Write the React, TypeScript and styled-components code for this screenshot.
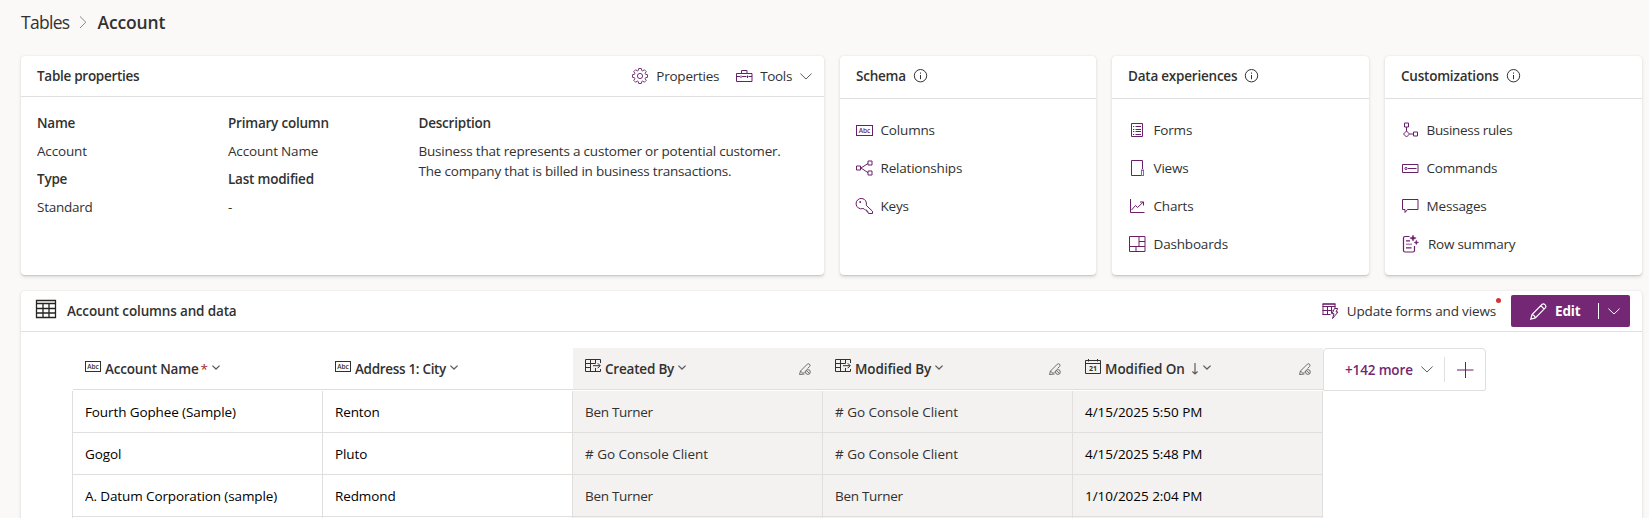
import React from "react";
import styled, { createGlobalStyle } from "styled-components";

const GlobalStyle = createGlobalStyle`
  * { box-sizing: border-box; }
  body {
    margin: 0;
    height: 518px;
    overflow: hidden;
    background: #faf9f8;
    color: #323130;
    font: 13.5px/20px "Segoe UI", "Open Sans", "Noto Sans", sans-serif;
  }
  svg { display: block; flex: none; overflow: visible; }
`;

const purple = "#742774";
const iconPurple = "#6a1f6b";
const line = "#e1dfdd";

type TextProps = { $track?: number; $strong?: boolean };

const Text = styled.span<TextProps>`
  white-space: nowrap;
  letter-spacing: ${(p) => p.$track ?? (p.$strong ? -0.22 : -0.17)}px;
  font-weight: ${(p) => (p.$strong ? 600 : 400)};
`;

const Page = styled.main`
  width: 1649px;
  height: 518px;
  padding: 0 7px 0 21px;
  overflow: hidden;
`;

const Breadcrumb = styled.nav`
  display: flex;
  align-items: center;
  height: 43px;
  margin-bottom: 13px;
  font-size: 17.5px;
  svg { margin: 0 10px 0 10px; }
`;

const TopCards = styled.section`
  display: grid;
  grid-template-columns: 803px 256px 257px 257px;
  gap: 16px;
  height: 219px;
  margin-bottom: 16px;
`;

const Card = styled.article`
  background: #fff;
  border-radius: 4px;
  box-shadow: 0 1.6px 3.6px rgba(0, 0, 0, 0.13), 0 0.3px 0.9px rgba(0, 0, 0, 0.1);
`;

const CardHeader = styled.header<{ $tall?: boolean }>`
  display: flex;
  align-items: center;
  height: ${(p) => (p.$tall ? 43 : 41)}px;
  padding: 0 12px ${(p) => (p.$tall ? 2 : 0)}px 16px;
  border-bottom: 1px solid ${line};
  svg { margin-left: 8px; }
`;

const Actions = styled.div`
  display: flex;
  align-items: center;
  margin-left: auto;
`;

const Action = styled.div<{ $gap?: number }>`
  position: relative;
  display: flex;
  align-items: center;
  gap: 8px;
  margin-left: ${(p) => p.$gap ?? 0}px;
  svg { margin: 0; }
`;

const Facts = styled.div`
  display: grid;
  grid-template-columns: 191px 190.5px 1fr;
  padding: 16px 16px 0;
`;

const FactColumn = styled.div`
  display: flex;
  flex-direction: column;
  gap: 8px;
`;

const Links = styled.ul<{ $indent: number }>`
  list-style: none;
  margin: 0;
  padding: 12px 0 0 ${(p) => p.$indent}px;
`;

const LinkItem = styled.li<{ $wide?: boolean }>`
  display: grid;
  grid-template-columns: ${(p) => (p.$wide ? 26 : 24.5)}px 1fr;
  align-items: center;
  height: 38px;
`;

const DataCard = styled(Card)`
  height: 240px;
`;

const DataHeader = styled(CardHeader)`
  padding: 0 12px 0 15px;
  > svg { margin: 0 11px 4px 0; }
`;

const Dot = styled.i`
  position: absolute;
  top: -3px;
  right: -5px;
  width: 5px;
  height: 5px;
  border-radius: 50%;
  background: #d13438;
`;

const EditButton = styled.button`
  display: flex;
  align-items: center;
  width: 119px;
  height: 32px;
  margin-left: 15px;
  padding: 0 10px 0 19px;
  border: 0;
  border-radius: 2px;
  background: ${purple};
  color: #fff;
  font: inherit;
  svg { margin: 0; }
`;

const EditLabel = styled(Text)`
  width: 43px;
  margin-left: 8px;
  text-align: left;
  font-weight: 700;
`;

const SplitLine = styled.i`
  width: 1px;
  height: 16px;
  margin-right: 9px;
  background: #fff;
`;

const TableArea = styled.div`
  display: flex;
  align-items: flex-start;
  padding: 16px 0 0 51px;
`;

const Table = styled.div`
  width: 1251px;
`;

const HeadRow = styled.div`
  display: grid;
  grid-template-columns: repeat(5, 250px);
  height: 42px;
  margin: 0 0 1px 1px;
  border-bottom: 1px solid ${line};
`;

const HeadCell = styled.div<{ $locked?: boolean }>`
  display: flex;
  align-items: center;
  padding: 0 12px;
  background: ${(p) => (p.$locked ? "#f3f2f1" : "#fff")};
  > svg:first-child { margin: 0 4px 5px 0; }
  > svg:last-child { margin-left: auto; }
`;

const HeadMark = styled.span<{ $space: number }>`
  margin-left: ${(p) => p.$space}px;
`;

const Required = styled(Text)`
  margin-left: 2px;
  color: #a4262c;
`;

const BodyRow = styled.div`
  display: grid;
  grid-template-columns: 251px repeat(4, 250px);
  height: 42px;
`;

const Cell = styled.div<{ $locked?: boolean; $soft?: boolean }>`
  display: flex;
  align-items: center;
  padding-left: 12px;
  border-right: 1px solid ${line};
  border-bottom: 1px solid ${line};
  background: ${(p) => (p.$locked ? "#f3f2f1" : "#fff")};
  color: ${(p) => (p.$soft ? "#323130" : "#000")};
  &:first-child { border-left: 1px solid ${line}; }
`;

const MoreBox = styled.div`
  display: flex;
  align-items: center;
  width: 163px;
  height: 43px;
  padding-left: 21px;
  border: 1px solid ${line};
  border-radius: 4px 4px 2px 0;
  color: ${purple};
`;

const MoreDivider = styled.i`
  width: 1px;
  height: 25px;
  margin: 0 12px 0 11px;
  background: ${line};
`;

type SvgProps = { w: number; h: number; color?: string; sw?: number; children: React.ReactNode };
const Svg = ({ w, h, color = iconPurple, sw = 1, children }: SvgProps) => (
  <svg width={w} height={h} viewBox={`0 0 ${w} ${h}`} fill="none" stroke={color} strokeWidth={sw}>
    {children}
  </svg>
);

const Chevron = ({ w = 12, color = "#605e5c", sw = 1 }) => (
  <Svg w={w} h={7} color={color} sw={sw}>
    <path d={`M.4 .6 ${w / 2} ${w / 2} ${w - 0.4} .6`} />
  </Svg>
);

const InfoIcon = () => (
  <Svg w={14} h={14} color="#323130">
    <circle cx="6.500" cy="6.700" r="6.200" />
    <path d="M6.500 6v4.200M6.500 3.500v1.200" />
  </Svg>
);

const gearPath = (() => {
  const pts: string[] = [];
  for (let i = 0; i < 8; i++) {
    const steps: [number, number][] = [[-17, 5.8], [-10, 7.6], [10, 7.6], [17, 5.8]];
    steps.forEach(([off, r]) => {
      const a = ((i * 45 + off) * Math.PI) / 180;
      pts.push(`${(8 + r * Math.cos(a)).toFixed(2)} ${(8 + r * Math.sin(a)).toFixed(2)}`);
    });
  }
  return `M${pts.join("L")}Z`;
})();

const GearIcon = () => (
  <Svg w={16} h={16} sw={0.9}>
    <path d={gearPath} />
    <circle cx="8" cy="8" r="2.6" />
  </Svg>
);

const ToolboxIcon = () => (
  <Svg w={16} h={12}>
    <path d="M.5 3.500h15.500v8H.5zM5.500 3.500v-3h5.500v3M.5 6.500h3.500M6 6.500h4.500M12.500 6.500h3.500M5 5.500v2.500M11.500 5.500v2.500" />
  </Svg>
);

const AbcIcon = ({ w = 17, color = iconPurple }) => (
  <Svg w={w} h={11} color={color}>
    <rect x=".5" y=".5" width={w - 1} height="10" />
    <text x={w / 2} y="8" fontSize="6.5" fontWeight="600" textAnchor="middle" fill={color} stroke="none">
      Abc
    </text>
  </Svg>
);

const RelationIcon = () => (
  <Svg w={17} h={16}>
    <path d="M.5 6h4v4h-4zM12 1h4v4h-4zM12 11h4v4h-4zM12 3.500 5 8l7 4.700" />
  </Svg>
);

const KeyIcon = () => (
  <Svg w={17} h={16}>
    <path d="M10.200 7.300a5.200 5.200 0 1 0-3.400 3.300l1.200 .1 1.500 1.500h1.400v1.500H12v1.300l.9.500h3.600v-2.200z" />
    <circle cx="4.200" cy="4" r=".9" fill={iconPurple} stroke="none" />
  </Svg>
);

const FormIcon = () => (
  <Svg w={16} h={16}>
    <path d="M2.500 1.500h11v13h-11zM6.500 4.500h5.500M6.500 7.500h5.500M6.500 9.500h5.500M6.500 12.500h5.500M4 4.500h1.200M4 7.500h1.200M4 9.500h1.200M4 12.500h1.200" />
  </Svg>
);

const ViewIcon = () => (
  <Svg w={16} h={16}>
    <path d="M13.500 9V.500h-11v15h9.500" />
    <rect x="12.500" y="10" width="2" height="5.500" stroke="#6f6dc0" />
  </Svg>
);

const ChartIcon = () => (
  <Svg w={16} h={16}>
    <path d="M1.500 1v13.500H15.500M2.500 12l4-4.500 2 2L14.300 4M11 4h3.500v3.500" />
  </Svg>
);

const DashboardIcon = () => (
  <Svg w={16} h={16}>
    <path d="M.5 .5h15.500v15H.5zM10 .500v10M10 5.500h6M.5 10.500h15.500M7 10.500v5" />
  </Svg>
);

const RuleIcon = () => (
  <Svg w={17} h={16}>
    <path d="M2.500 1h4v4h-4zM4.500 5v4M4.500 9 7.500 12l-3 3-3-3zM7.500 12h4M11.500 10h4v4h-4z" />
  </Svg>
);

const CommandIcon = () => (
  <Svg w={16} h={9}>
    <path d="M.5 .5h15.500v8H.5zM6 4.500h8.500" />
    <circle cx="4" cy="4.500" r="1.100" />
  </Svg>
);

const MessageIcon = () => (
  <Svg w={16} h={14}>
    <path d="M.5 .5h15.500v10H5.500L3 13.500v-3H.5z" />
  </Svg>
);

const SummaryIcon = () => (
  <Svg w={17} h={17} sw={1.2}>
    <path d="M7.500 .500H3q-1.500 0-1.500 1.500v12.500Q1.500 16 3 16h8q1.500 0 1.500-1.500V10" />
    <path d="M4 4.800h4M4 11.800h5.500" />
    <path d="M4 8.300h6" stroke="#b58ab5" strokeWidth="1.600" />
    <path d="M11 -.9l.9 2.100 2.300.9-2.300.9L11 5.100l-.9-2.100-2.300-.9 2.300-.9zM14.300 4.300l.6 1.600 1.700.6-1.700.6-.6 1.600-.6-1.600-1.600-.6 1.600-.6z" fill={iconPurple} strokeWidth=".5" />
  </Svg>
);

const GridIcon = () => (
  <Svg w={20} h={18} color="#252423">
    <path d="M.5 .5h19v17H.5zM.5 3.500h19M.5 8.500h19M.5 13h19M7 3.500v14M13 3.500v14" strokeWidth="1.300" />
  </Svg>
);

const UpdateIcon = () => (
  <Svg w={17} h={16}>
    <path d="M.5 1h13" strokeWidth="1.600" />
    <path d="M.5 3.500h13M.5 7.500h10M.5 11.500h8M1 1v11M5.500 3.500v8M9.500 3.500v7M13 1v4" />
    <path d="M12.500 5.500h3.200l-1.700 3.500h2L10.500 15.500l1.500-4.800H10z" fill="#fff" />
  </Svg>
);

const PencilIcon = () => (
  <Svg w={17} h={17} color="#fff" sw={1.2}>
    <path d="M.8 16.200 2 11.500 12.200 1.300q1.300-1 2.800.300 1.700 1.500.500 3.100L5.300 15zM10.800 2.700l3.300 3.300M2 11.500q2.600.500 3.300 3.500" />
  </Svg>
);

const LookupIcon = () => (
  <Svg w={16} h={14} color="#323130">
    <path d="M15.500 4V.5H.5v12h15V10M5.500.500v12M.5 4.500h10M.5 8.500h5M10.500.500v4M10.500 9v3.500M8 6.700h7M12.700 4.200l2.500 2.500-2.500 2.500" />
  </Svg>
);

const DateIcon = () => (
  <Svg w={16} h={15} color="#323130">
    <path d="M.5 1.500h15v13H.5zM.5 4.500h15M3.500 0v2.500M12.500 0v2.500" />
    <text x="8" y="12.200" fontSize="7" fontWeight="700" textAnchor="middle" fill="#323130" stroke="none">21</text>
  </Svg>
);

const LockedEditIcon = () => (
  <Svg w={12} h={12} color="#605e5c" sw={0.9}>
    <path d="M5.500 11 .5 11.500 1.500 8 8.300 1.200q1-.9 2.200 0 1 1.100.200 2.200L8.500 5.500M1.500 8l2.500 2.500 2-2" />
    <circle cx="8.900" cy="9" r="2.400" />
    <path d="m7.300 7.400 3.200 3.200" />
  </Svg>
);

const CrumbChevron = () => (
  <Svg w={8} h={12} color="#8a8886">
    <path d="M1 .5 6.800 6.200 1 12" />
  </Svg>
);

const PlusIcon = () => (
  <Svg w={16} h={16}>
    <path d="M8.500 0v16M0 8h16.500" />
  </Svg>
);

const SortArrow = () => (
  <Svg w={6} h={12} color="#605e5c">
    <path d="M3 0v11M.4 8.500 3 11l2.600-2.500" strokeWidth="1.200" />
  </Svg>
);

type LinkEntry = { label: string; icon: React.ReactNode; track?: number };

const linkCards: { title: string; indent: number; links: LinkEntry[] }[] = [
  {
    title: "Schema",
    indent: 16,
    links: [
      { label: "Columns", icon: <AbcIcon /> },
      { label: "Relationships", icon: <RelationIcon />, track: -0.2 },
      { label: "Keys", icon: <KeyIcon /> },
    ],
  },
  {
    title: "Data experiences",
    indent: 17,
    links: [
      { label: "Forms", icon: <FormIcon /> },
      { label: "Views", icon: <ViewIcon /> },
      { label: "Charts", icon: <ChartIcon /> },
      { label: "Dashboards", icon: <DashboardIcon /> },
    ],
  },
  {
    title: "Customizations",
    indent: 17,
    links: [
      { label: "Business rules", icon: <RuleIcon />, track: -0.32 },
      { label: "Commands", icon: <CommandIcon /> },
      { label: "Messages", icon: <MessageIcon /> },
      { label: "Row summary", icon: <SummaryIcon />, track: -0.25 },
    ],
  },
];

const columns = [
  { title: "Account Name", icon: <AbcIcon w={16} color="#323130" />, required: true, track: -0.18, space: 4 },
  { title: "Address 1: City", icon: <AbcIcon w={16} color="#323130" />, track: -0.32, space: 4 },
  { title: "Created By", icon: <LookupIcon />, locked: true, track: -0.2, space: 4 },
  { title: "Modified By", icon: <LookupIcon />, locked: true, track: -0.1, space: 4 },
  { title: "Modified On", icon: <DateIcon />, locked: true, sorted: true, track: -0.05, space: 5 },
];

const rows = [
  ["Fourth Gophee (Sample)", "Renton", "Ben Turner", "# Go Console Client", "4/15/2025 5:50 PM"],
  ["Gogol", "Pluto", "# Go Console Client", "# Go Console Client", "4/15/2025 5:48 PM"],
  ["A. Datum Corporation (sample)", "Redmond", "Ben Turner", "Ben Turner", "1/10/2025 2:04 PM"],
  ["", "", "", "", ""],
];

const cellTrack = (value: string) => {
  if (value.startsWith("#") || value.endsWith("PM")) return -0.03;
  if (value === "Ben Turner") return -0.3;
  return -0.11;
};

export default function App() {
  return (
    <Page>
      <GlobalStyle />
      <Breadcrumb>
        <Text $track={-0.7}>Tables</Text>
        <CrumbChevron />
        <Text $strong $track={-0.15}>Account</Text>
      </Breadcrumb>
      <TopCards>
        <Card>
          <CardHeader>
            <Text $strong $track={-0.28}>Table properties</Text>
            <Actions>
              <Action><GearIcon /><Text $track={-0.25}>Properties</Text></Action>
              <Action $gap={17}><ToolboxIcon /><Text $track={-0.35}>Tools</Text><Chevron /></Action>
            </Actions>
          </CardHeader>
          <Facts>
            <FactColumn>
              <Text $strong>Name</Text>
              <Text>Account</Text>
              <Text $strong>Type</Text>
              <Text $track={-0.25}>Standard</Text>
            </FactColumn>
            <FactColumn>
              <Text $strong>Primary column</Text>
              <Text>Account Name</Text>
              <Text $strong>Last modified</Text>
              <Text>-</Text>
            </FactColumn>
            <FactColumn>
              <Text $strong>Description</Text>
              <Text $track={-0.2}>
                Business that represents a customer or potential customer.<br />
                The company that is billed in business transactions.
              </Text>
            </FactColumn>
          </Facts>
        </Card>
        {linkCards.map((card) => (
          <Card key={card.title}>
            <CardHeader $tall>
              <Text $strong>{card.title}</Text>
              <InfoIcon />
            </CardHeader>
            <Links $indent={card.indent}>
              {card.links.map(({ label, icon, track }) => (
                <LinkItem key={label} $wide={label === "Row summary"}>
                  {icon}
                  <Text $track={track}>{label}</Text>
                </LinkItem>
              ))}
            </Links>
          </Card>
        ))}
      </TopCards>
      <DataCard>
        <DataHeader>
          <GridIcon />
          <Text $strong $track={-0.15}>Account columns and data</Text>
          <Actions>
            <Action><UpdateIcon /><Text $track={-0.15}>Update forms and views</Text><Dot /></Action>
            <EditButton>
              <PencilIcon />
              <EditLabel>Edit</EditLabel>
              <SplitLine />
              <Chevron color="#fff" />
            </EditButton>
          </Actions>
        </DataHeader>
        <TableArea>
          <Table>
            <HeadRow>
              {columns.map((c) => (
                <HeadCell key={c.title} $locked={c.locked}>
                  {c.icon}
                  <Text $strong $track={c.track}>{c.title}</Text>
                  {c.required && <Required>*</Required>}
                  {c.sorted && <HeadMark $space={7}><SortArrow /></HeadMark>}
                  <HeadMark $space={c.space}><Chevron w={8} sw={1.3} /></HeadMark>
                  {c.locked && <LockedEditIcon />}
                </HeadCell>
              ))}
            </HeadRow>
            {rows.map((r, i) => (
              <BodyRow key={i}>
                {r.map((value, j) => (
                  <Cell key={j} $locked={j > 1} $soft={j === 2 || j === 3}>
                    <Text $track={cellTrack(value)}>{value}</Text>
                  </Cell>
                ))}
              </BodyRow>
            ))}
          </Table>
          <MoreBox>
            <Text $strong $track={-0.15}>+142 more</Text>
            <HeadMark $space={8}><Chevron /></HeadMark>
            <MoreDivider />
            <PlusIcon />
          </MoreBox>
        </TableArea>
      </DataCard>
    </Page>
  );
}
